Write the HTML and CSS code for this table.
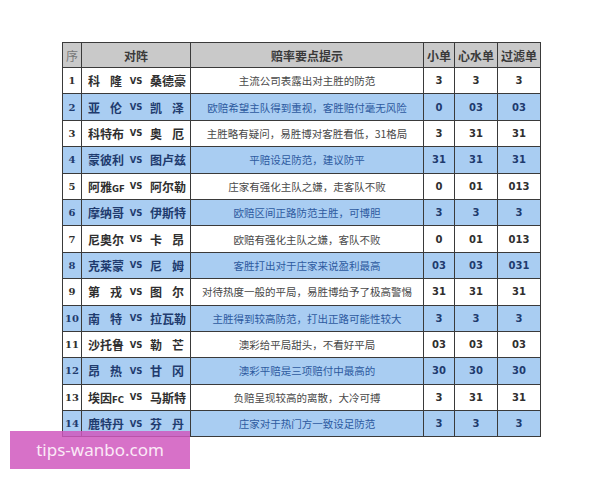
FILE: index.html
```html
<!DOCTYPE html>
<html lang="zh">
<head>
<meta charset="utf-8">
<link rel="stylesheet" href="styles.css">
</head>
<body>
<div class="page">
<table class="tips">
<colgroup>
<col class="c-no"><col class="c-match"><col class="c-tip"><col class="c-n1"><col class="c-n2"><col class="c-n3">
</colgroup>
<thead>
<tr><th class="no">序</th><th>对阵</th><th>赔率要点提示</th><th>小单</th><th>心水单</th><th>过滤单</th></tr>
</thead>
<tbody>
<tr><td class="no">1</td><td><div class="match"><span class="team">科隆</span><span class="vs">VS</span><span class="team">桑德豪</span></div></td><td class="tip">主流公司表露出对主胜的防范</td><td>3</td><td>3</td><td>3</td></tr>
<tr class="hl"><td class="no">2</td><td><div class="match"><span class="team">亚伦</span><span class="vs">VS</span><span class="team">凯泽</span></div></td><td class="tip">欧赔希望主队得到重视，客胜赔付毫无风险</td><td>0</td><td>03</td><td>03</td></tr>
<tr><td class="no">3</td><td><div class="match"><span class="team">科特布</span><span class="vs">VS</span><span class="team">奥厄</span></div></td><td class="tip">主胜略有疑问，易胜博对客胜看低，31格局</td><td>3</td><td>31</td><td>31</td></tr>
<tr class="hl"><td class="no">4</td><td><div class="match"><span class="team">蒙彼利</span><span class="vs">VS</span><span class="team">图卢兹</span></div></td><td class="tip">平赔设足防范，建议防平</td><td>31</td><td>31</td><td>31</td></tr>
<tr><td class="no">5</td><td><div class="match"><span class="team">阿雅<span class="lat">GF</span></span><span class="vs">VS</span><span class="team">阿尔勒</span></div></td><td class="tip">庄家有强化主队之嫌，走客队不败</td><td>0</td><td>01</td><td>013</td></tr>
<tr class="hl"><td class="no">6</td><td><div class="match"><span class="team">摩纳哥</span><span class="vs">VS</span><span class="team">伊斯特</span></div></td><td class="tip">欧赔区间正路防范主胜，可博胆</td><td>3</td><td>3</td><td>3</td></tr>
<tr><td class="no">7</td><td><div class="match"><span class="team">尼奥尔</span><span class="vs">VS</span><span class="team">卡昂</span></div></td><td class="tip">欧赔有强化主队之嫌，客队不败</td><td>0</td><td>01</td><td>013</td></tr>
<tr class="hl"><td class="no">8</td><td><div class="match"><span class="team">克莱蒙</span><span class="vs">VS</span><span class="team">尼姆</span></div></td><td class="tip">客胜打出对于庄家来说盈利最高</td><td>03</td><td>03</td><td>031</td></tr>
<tr><td class="no">9</td><td><div class="match"><span class="team">第戎</span><span class="vs">VS</span><span class="team">图尔</span></div></td><td class="tip">对待热度一般的平局，易胜博给予了极高警惕</td><td>31</td><td>31</td><td>31</td></tr>
<tr class="hl"><td class="no">10</td><td><div class="match"><span class="team">南特</span><span class="vs">VS</span><span class="team">拉瓦勒</span></div></td><td class="tip">主胜得到较高防范，打出正路可能性较大</td><td>3</td><td>3</td><td>3</td></tr>
<tr><td class="no">11</td><td><div class="match"><span class="team">沙托鲁</span><span class="vs">VS</span><span class="team">勒芒</span></div></td><td class="tip">澳彩给平局甜头，不看好平局</td><td>03</td><td>03</td><td>03</td></tr>
<tr class="hl"><td class="no">12</td><td><div class="match"><span class="team">昂热</span><span class="vs">VS</span><span class="team">甘冈</span></div></td><td class="tip">澳彩平赔是三项赔付中最高的</td><td>30</td><td>30</td><td>30</td></tr>
<tr><td class="no">13</td><td><div class="match"><span class="team">埃因<span class="lat">FC</span></span><span class="vs">VS</span><span class="team">马斯特</span></div></td><td class="tip">负赔呈现较高的离散，大冷可搏</td><td>3</td><td>31</td><td>31</td></tr>
<tr class="hl"><td class="no">14</td><td><div class="match"><span class="team">鹿特丹</span><span class="vs">VS</span><span class="team">芬丹</span></div></td><td class="tip">庄家对于热门方一致设足防范</td><td>3</td><td>3</td><td>3</td></tr>
</tbody>
</table>
<div class="watermark">tips-wanbo.com</div>
</div>
</body>
</html>
```
FILE: styles.css
```css
html, body {
  margin: 0;
  padding: 0;
  background: #ffffff;
}
.page {
  position: relative;
  width: 600px;
  height: 480px;
  padding: 42px 0 0 62px;
  box-sizing: border-box;
}
.tips {
  border-collapse: collapse;
  table-layout: fixed;
  width: 478px;
  font-family: "Noto Sans CJK SC", "DejaVu Sans", sans-serif;
  color: #333;
  border: 1px solid #2a2a2a;
}
.c-no { width: 19px; }
.c-match { width: 109px; }
.c-tip { width: 233px; }
.c-n1 { width: 31px; }
.c-n2 { width: 43px; }
.c-n3 { width: 43px; }
.tips th, .tips td {
  border: 1px solid #3a3a3a;
  padding: 0;
  text-align: center;
  vertical-align: middle;
}
.tips thead tr { height: 25px; }
.tips th {
  background: #c9c9c9;
  font-size: 12px;
  font-weight: 700;
  color: #3a3a3a;
}
.tips th.no { color: #777; font-weight: 400; }
.tips tbody tr { height: 26.4px; }
.tips td {
  font-family: "DejaVu Sans", sans-serif;
  font-weight: 700;
  font-size: 10px;
  color: #2f2f2f;
}
.tips td.no { font-family: "DejaVu Serif", serif; font-size: 10px; }
.tips td.tip {
  font-family: "Noto Sans CJK SC", sans-serif;
  font-weight: 400;
  font-size: 10.5px;
  color: #484848;
}
.tips tr.hl td {
  background: #a9cdf2;
  color: #1f3b6e;
}
.tips tr.hl td.tip { color: #2d5aa0; }
.match {
  display: flex;
  align-items: center;
  justify-content: space-between;
  padding: 0 6px 0 6px;
}
.team {
  width: 34px;
  font-family: "Noto Sans CJK SC", sans-serif;
  font-weight: 700;
  font-size: 12px;
  text-align: justify;
  text-align-last: justify;
  white-space: nowrap;
}
.lat {
  font-family: "DejaVu Sans", sans-serif;
  font-size: 8.5px;
}
.vs {
  font-family: "DejaVu Sans", sans-serif;
  font-size: 8.5px;
  font-weight: 700;
}
.watermark {
  position: absolute;
  left: 10px;
  top: 431px;
  width: 180px;
  height: 38px;
  background: rgba(208, 88, 190, 0.85);
  color: #fbe9f7;
  font-family: "Noto Sans", "DejaVu Sans", sans-serif;
  font-size: 17px;
  line-height: 38px;
  text-align: center;
}
```
